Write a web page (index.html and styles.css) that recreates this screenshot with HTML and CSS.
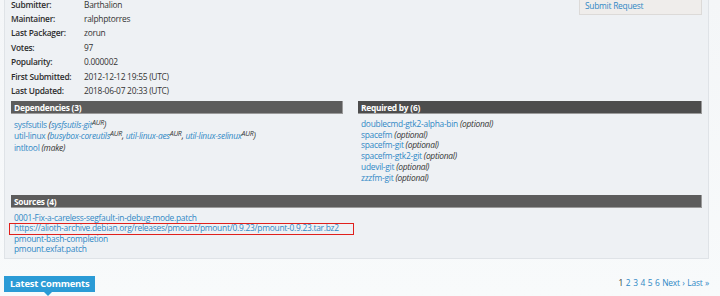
FILE: index.html
```html
<!DOCTYPE html>
<html lang="en">
<head>
  <meta charset="UTF-8">
  <title>pmount — AUR package details</title>
  <link rel="stylesheet" href="styles.css">
</head>
<body>
  <div class="pkg-box">
    <div class="pkg-top">
      <table class="pkg-info">
        <tr><th>Submitter:</th><td>Barthalion</td></tr>
        <tr><th>Maintainer:</th><td>ralphptorres</td></tr>
        <tr><th>Last Packager:</th><td>zorun</td></tr>
        <tr><th>Votes:</th><td>97</td></tr>
        <tr><th>Popularity:</th><td>0.000002</td></tr>
        <tr><th>First Submitted:</th><td>2012-12-12 19:55 (UTC)</td></tr>
        <tr><th>Last Updated:</th><td>2018-06-07 20:33 (UTC)</td></tr>
      </table>
      <div class="actions">
        <a href="#">Submit Request</a>
      </div>
    </div>

    <div class="pkg-lists">
      <section class="listing">
        <h3 class="bar">Dependencies (3)</h3>
        <ul class="items">
          <li><a href="#">sysfsutils</a> <em>(<a href="#">sysfsutils-git</a><sup>AUR</sup>)</em></li>
          <li><a href="#">util-linux</a> <em>(<a href="#">busybox-coreutils</a><sup>AUR</sup>, <a href="#">util-linux-aes</a><sup>AUR</sup>, <a href="#">util-linux-selinux</a><sup>AUR</sup>)</em></li>
          <li><a href="#">intltool</a> <em>(make)</em></li>
        </ul>
      </section>
      <section class="listing">
        <h3 class="bar bar-dark">Required by (6)</h3>
        <ul class="items items-req">
          <li><a href="#">doublecmd-gtk2-alpha-bin</a> <em>(optional)</em></li>
          <li><a href="#">spacefm</a> <em>(optional)</em></li>
          <li><a href="#">spacefm-git</a> <em>(optional)</em></li>
          <li><a href="#">spacefm-gtk2-git</a> <em>(optional)</em></li>
          <li><a href="#">udevil-git</a> <em>(optional)</em></li>
          <li><a href="#">zzzfm-git</a> <em>(optional)</em></li>
        </ul>
      </section>
    </div>

    <section class="listing sources">
      <h3 class="bar">Sources (4)</h3>
      <ul class="items items-src">
        <li><a href="#">0001-Fix-a-careless-segfault-in-debug-mode.patch</a></li>
        <li class="marked"><a href="#">https://alioth-archive.debian.org/releases/pmount/pmount/0.9.23/pmount-0.9.23.tar.bz2</a></li>
        <li><a href="#">pmount-bash-completion</a></li>
        <li><a href="#">pmount.exfat.patch</a></li>
      </ul>
    </section>
  </div>

  <div class="comments-head">
    <h2 class="tab">Latest Comments</h2>
    <p class="pager">
      <span class="current">1</span>
      <a href="#">2</a>
      <a href="#">3</a>
      <a href="#">4</a>
      <a href="#">5</a>
      <a href="#">6</a>
      <a href="#">Next ›</a>
      <a href="#">Last »</a>
    </p>
  </div>
</body>
</html>
```

FILE: styles.css
```css
* {
  margin: 0;
  padding: 0;
  box-sizing: border-box;
}
body {
  font-family: "Open Sans", "Noto Sans", sans-serif;
  font-size: 8.4px;
  letter-spacing: -0.25px;
  color: #333;
  background: linear-gradient(#f4f6f8, #f8fafb);
  width: 720px;
  height: 296px;
  overflow: hidden;
}
a {
  color: #2f88c5;
  text-decoration: none;
}
ul {
  list-style: none;
}

.pkg-box {
  margin-left: 4px;
  width: 705px;
  height: 259px;
  padding: 0 6px;
  background: #eef1f4;
  border: 1px solid #dfe3e7;
  border-top: none;
}
.pkg-top {
  display: flex;
  justify-content: space-between;
  align-items: flex-start;
}
.pkg-info {
  margin-top: -3px;
  border-collapse: collapse;
}
.pkg-info th,
.pkg-info td {
  height: 14.4px;
  padding: 0;
  text-align: left;
  vertical-align: middle;
  white-space: nowrap;
}
.pkg-info th {
  width: 73px;
  font-weight: 600;
  color: #2d2d2d;
}
.actions {
  width: 123px;
  margin-top: -10px;
  padding: 10px 5px 3px;
  background: #efedeb;
  border: 1px solid #dcdad8;
  border-top: none;
}

.pkg-lists {
  display: grid;
  grid-template-columns: 332px 1fr;
  gap: 15px;
  margin-top: 3px;
  height: 94px;
}
.bar {
  height: 13px;
  padding: 0 3px;
  font-size: 8.4px;
  line-height: 13px;
  font-weight: 700;
  color: #fff;
  background: #5c5c5c;
  border: 1px solid #9a9a9a;
  border-width: 0 1px 1px 0;
}
.bar-dark {
  background: #4d4d4d;
}
.items {
  padding: 5px 3px 0;
  line-height: 11.5px;
}
.items em {
  color: #333;
}
.items sup {
  font-size: 7px;
  line-height: 0;
  vertical-align: 3px;
}
.items-req {
  line-height: 10.8px;
}
.items-src {
  line-height: 10.4px;
}
.marked {
  position: relative;
  width: 340px;
  white-space: nowrap;
}
.marked::after {
  content: "";
  position: absolute;
  left: -5px;
  right: 0;
  top: 0;
  bottom: -1.5px;
  border: 1.5px solid #e0201c;
}

.comments-head {
  display: flex;
  justify-content: space-between;
  align-items: flex-end;
  width: 705px;
  margin: 17px 0 0 4px;
}
.tab {
  position: relative;
  height: 16px;
  padding: 0 6px;
  font-size: 9.4px;
  letter-spacing: -0.2px;
  line-height: 16px;
  font-weight: 700;
  color: #fff;
  background: #2b9bd6;
}
.tab::after {
  content: "";
  position: absolute;
  left: 40px;
  top: 16px;
  border: 4px solid transparent;
  border-top-color: #2b9bd6;
}
.pager {
  margin-bottom: 4px;
  font-size: 8.4px;
  word-spacing: 0.8px;
}
.pager .current {
  color: #333;
}
```
